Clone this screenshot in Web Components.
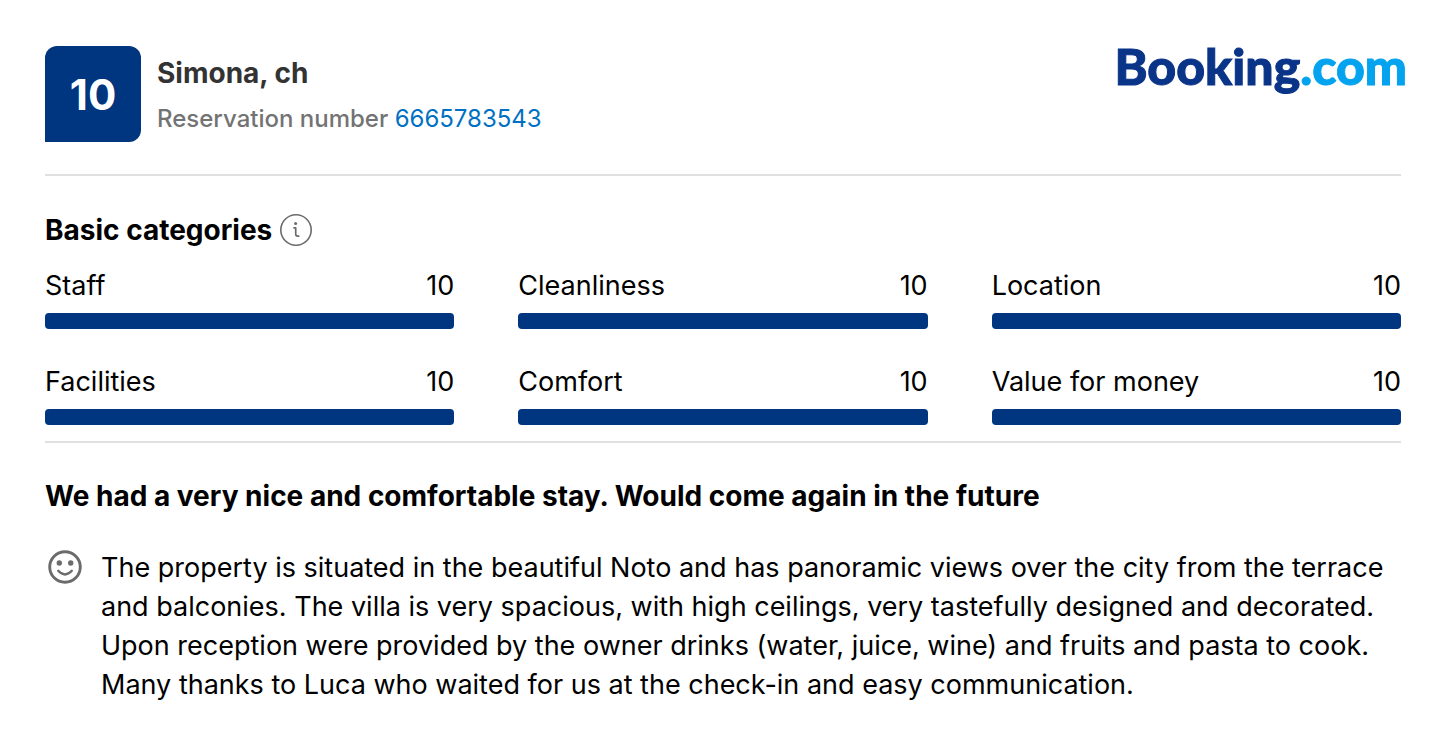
<!DOCTYPE html>
<html lang="en">
<head>
<meta charset="utf-8">
<meta name="viewport" content="width=device-width, initial-scale=1">
<title>Guest review</title>
<style>
body { margin: 0; background: #fff; color: #000; font-family: Inter, "Liberation Sans", sans-serif; font-size: 27px; line-height: 39px; }
</style>
</head>
<body>
<guest-review>
  <review-header slot="header" score="10" reservation="6665783543">Simona, ch</review-header>
  <review-categories slot="categories">
    <span slot="title">Basic categories</span>
    <category-score value="10">Staff</category-score>
    <category-score value="10">Cleanliness</category-score>
    <category-score value="10">Location</category-score>
    <category-score value="10">Facilities</category-score>
    <category-score value="10">Comfort</category-score>
    <category-score value="10">Value for money</category-score>
  </review-categories>
  <review-comment slot="comment">
    <span slot="title">We had a very nice and comfortable stay. Would come again in the future</span>
    The property is situated in the beautiful Noto and has panoramic views over the city from the terrace and balconies. The villa is very spacious, with high ceilings, very tastefully designed and decorated. Upon reception were provided by the owner drinks (water, juice, wine) and fruits and pasta to cook. Many thanks to Luca who waited for us at the check-in and easy communication.
  </review-comment>
</guest-review>
<script>
function define(name, html, setup) {
  const template = document.createElement('template');
  template.innerHTML = html;
  customElements.define(name, class extends HTMLElement {
    constructor() {
      super();
      this.attachShadow({ mode: 'open' }).append(template.content.cloneNode(true));
    }
    connectedCallback() { if (setup) setup(this, this.shadowRoot); }
  });
}

define('guest-review', `
<style>
  :host { display: block; padding: 46px 47px 32px 45px; }
  article { display: flex; flex-direction: column; }
  hr { width: 100%; height: 2px; margin: 0; border: 0; background: #e0e0e0; }
  .first { margin: 32px 0 34px; }
  .second { margin: 16px 0 33px; }
</style>
<article>
  <slot name="header"></slot>
  <hr class="first">
  <slot name="categories"></slot>
  <hr class="second">
  <slot name="comment"></slot>
</article>`);

define('booking-logo', `
<style>
  :host { display: block; font: 900 50px/40px Lato, sans-serif; color: #0a3488; white-space: nowrap; -webkit-text-stroke: 1px currentColor; }
  a { color: inherit; text-decoration: none; }
  span { color: #03a3ef; }
</style>
<a href="#">Booking<span>.com</span></a>`);

define('review-header', `
<style>
  :host { display: block; }
  header { display: flex; align-items: flex-start; gap: 16px; }
  .score { flex: none; display: grid; place-items: center; width: 96px; height: 96px; border-radius: 12px 12px 12px 0; background: #003580; color: #fff; font-size: 42px; font-weight: 700; }
  .guest { flex: 1; min-width: 0; padding-top: 7px; }
  h1 { margin: 0; font-size: 28px; line-height: 40px; font-weight: 700; color: #333; }
  p { margin: 8px 0 0; font-size: 24px; line-height: 36px; font-weight: 500; color: #737373; }
  p a { font-weight: 400; color: #0071c2; text-decoration: none; }
  booking-logo { margin-right: -6px; }
</style>
<header>
  <div class="score"></div>
  <div class="guest">
    <h1><slot></slot></h1>
    <p>Reservation number <a href="#"></a></p>
  </div>
  <booking-logo></booking-logo>
</header>`, (host, root) => {
  root.querySelector('.score').textContent = host.getAttribute('score');
  root.querySelector('p a').textContent = host.getAttribute('reservation');
});

define('review-categories', `
<style>
  :host { display: block; }
  .heading { display: flex; align-items: center; gap: 8px; }
  h2 { margin: 0; font-size: 28px; line-height: 40px; font-weight: 700; }
  button { display: block; width: 32px; height: 32px; padding: 0; border: 0; background: none; color: #6b6b6b; }
  svg { display: block; }
  .grid { display: grid; grid-template-columns: repeat(3, minmax(0, 1fr)); gap: 32px 64px; margin-top: 15px; }
</style>
<section>
  <div class="heading">
    <h2><slot name="title"></slot></h2>
    <button type="button" aria-label="About the categories">
      <svg width="32" height="32" viewBox="0 0 32 32" fill="none" stroke="currentColor" stroke-linecap="round" stroke-linejoin="round">
        <circle cx="16" cy="16" r="15.200" stroke-width="1.600"/>
        <path d="M14 13.800h1.700v6q0 2.400 2 2.400h1" stroke-width="1.700"/>
        <circle cx="15.600" cy="9.500" r="1.500" fill="currentColor" stroke="none"/>
      </svg>
    </button>
  </div>
  <div class="grid"><slot></slot></div>
</section>`);

define('category-score', `
<style>
  :host { display: block; }
  .row { display: flex; justify-content: space-between; line-height: 42px; }
  .track { height: 16px; margin-top: 6px; border-radius: 4px; background: #e6e6e6; overflow: hidden; }
  .fill { height: 100%; background: #003580; }
</style>
<div class="row"><span><slot></slot></span><span class="value"></span></div>
<div class="track"><div class="fill"></div></div>`, (host, root) => {
  const value = host.getAttribute('value');
  root.querySelector('.value').textContent = value;
  root.querySelector('.fill').style.width = value * 10 + '%';
});

define('review-comment', `
<style>
  :host { display: block; }
  h2 { margin: 0; font-size: 28px; line-height: 40px; font-weight: 700; }
  .body { display: flex; align-items: flex-start; gap: 16px; margin-top: 32px; }
  svg { flex: none; color: #6b6b6b; }
  p { flex: 1; min-width: 0; margin: 0; }
</style>
<section>
  <h2><slot name="title"></slot></h2>
  <div class="body">
    <svg width="40" height="40" viewBox="0 0 40 40" fill="none" stroke="currentColor" stroke-linecap="round" role="img" aria-label="Liked">
      <circle cx="20" cy="19" r="15.300" stroke-width="2.900"/>
      <circle cx="14.300" cy="15" r="2.700" fill="currentColor" stroke="none"/>
      <circle cx="25.700" cy="15" r="2.700" fill="currentColor" stroke="none"/>
      <path d="M13.200 22.800q6.800 7.400 13.600 0" stroke-width="2.400"/>
    </svg>
    <p><slot></slot></p>
  </div>
</section>`);
</script>
</body>
</html>
